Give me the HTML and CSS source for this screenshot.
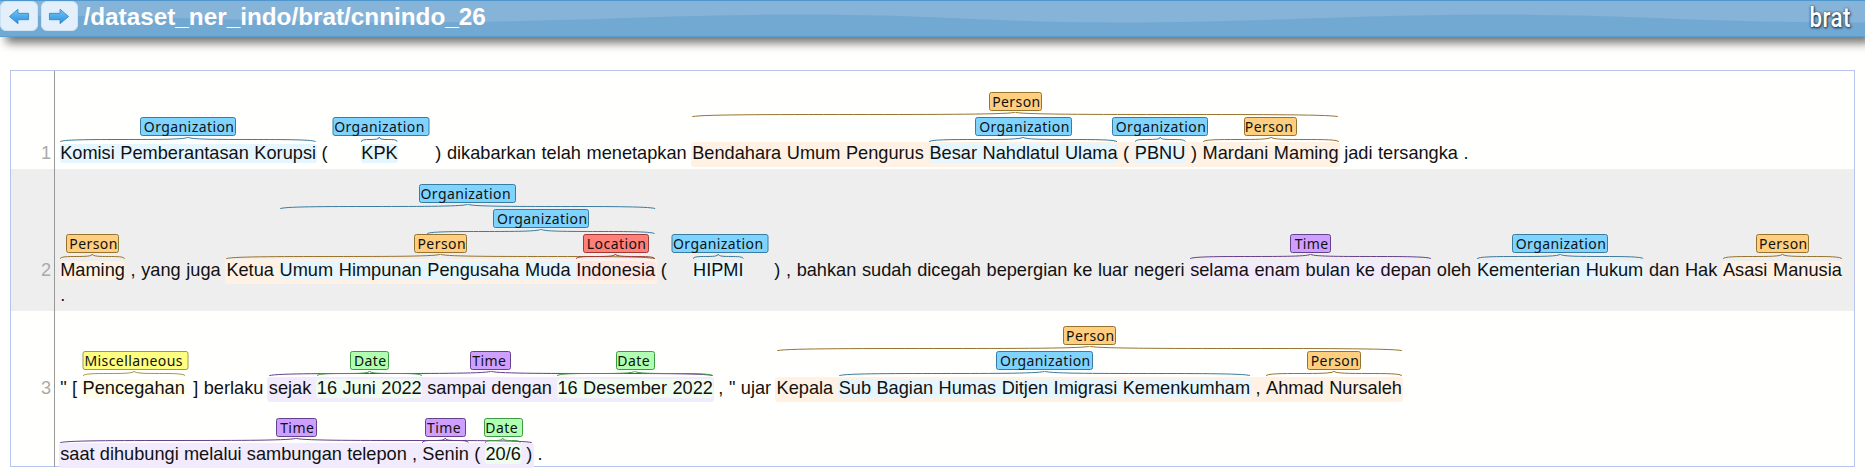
FILE: index.html
```html
<!DOCTYPE html>
<html lang="id">
<head>
<meta charset="utf-8">
<title>/dataset_ner_indo/brat/cnnindo_26</title>
<link rel="stylesheet" href="styles.css">
</head>
<body>
<svg class="defs" aria-hidden="true">
  <defs>
    <linearGradient id="arrowFill" x1="0" y1="0" x2="0" y2="1">
      <stop offset="0" stop-color="#7cc4f2"/><stop offset="1" stop-color="#2390e0"/>
    </linearGradient>
    <symbol id="curly" viewBox="0 0 100 5" preserveAspectRatio="none">
      <path d="M0,5 C0,0 50,5 50,0 C50,5 100,0 100,5" fill="none" stroke="currentColor" vector-effect="non-scaling-stroke"/>
    </symbol>
  </defs>
</svg>
<header class="bar">
  <svg class="wave" viewBox="0 0 1865 36" preserveAspectRatio="none"><path d="M0,15 C150,14 250,22 415,22 C560,22 660,14 802,14 C940,14 980,22 1118,22 C1260,22 1360,14 1505,14 C1640,14 1690,22 1865,22 V36 H0Z"/></svg>
  <nav class="nav">
    <a class="btn"><svg viewBox="0 0 20 16"><path d="M1 8 L9 1.2 V5 H19 V11 H9 V14.8Z"/></svg></a>
    <a class="btn"><svg viewBox="0 0 20 16"><path d="M19 8 L11 1.2 V5 H1 V11 H11 V14.8Z"/></svg></a>
  </nav>
  <h1 class="path">/dataset_ner_indo/brat/cnnindo_26</h1>
  <span class="logo">brat</span>
</header>
<main class="doc">
  <section class="sent s1">
    <div class="num">1</div>
    <div class="lines">
      <p class="line"><span class="ent org"><b class="tag">Organization</b><svg class="curl"><use href="#curly"/></svg>Komisi Pemberantasan Korupsi</span> ( <span class="ent org kpk wide"><b class="tag left">Organization</b><svg class="curl"><use href="#curly"/></svg>KPK</span> ) dikabarkan telah menetapkan <span class="ent per outer l2"><b class="tag">Person</b><svg class="curl"><use href="#curly"/></svg>Bendahara Umum Pengurus <span class="ent org"><b class="tag">Organization</b><svg class="curl"><use href="#curly"/></svg>Besar Nahdlatul Ulama</span> ( <span class="ent org"><b class="tag">Organization</b><svg class="curl"><use href="#curly"/></svg>PBNU</span> ) <span class="ent per"><b class="tag left">Person</b><svg class="curl"><use href="#curly"/></svg>Mardani Maming</span></span> jadi tersangka .</p>
    </div>
  </section>
  <section class="sent s2">
    <div class="num">2</div>
    <div class="lines">
      <p class="line"><span class="ent per"><b class="tag">Person</b><svg class="curl"><use href="#curly"/></svg>Maming</span> , yang juga <span class="ent per outer"><b class="tag">Person</b><svg class="curl"><use href="#curly"/></svg>Ketua <span class="ent org l3"><b class="tag left">Organization</b><svg class="curl"><use href="#curly"/></svg>Umum Himpunan <span class="ent org l2"><b class="tag">Organization</b><svg class="curl"><use href="#curly"/></svg>Pengusaha Muda <span class="ent loc"><b class="tag">Location</b><svg class="curl"><use href="#curly"/></svg>Indonesia</span></span></span></span> ( <span class="ent org hipmi wide"><b class="tag left">Organization</b><svg class="curl"><use href="#curly"/></svg>HIPMI</span> ) , bahkan sudah dicegah bepergian ke luar negeri <span class="ent tim"><b class="tag">Time</b><svg class="curl"><use href="#curly"/></svg>selama enam bulan ke depan</span> oleh <span class="ent org"><b class="tag">Organization</b><svg class="curl"><use href="#curly"/></svg>Kementerian Hukum</span> dan Hak <span class="ent per"><b class="tag">Person</b><svg class="curl"><use href="#curly"/></svg>Asasi Manusia</span></p>
      <p class="line">.</p>
    </div>
  </section>
  <section class="sent s3">
    <div class="num">3</div>
    <div class="lines">
      <p class="line first">" [ <span class="ent mis wide misc"><b class="tag left">Miscellaneous</b><svg class="curl"><use href="#curly"/></svg>Pencegahan</span> ] berlaku <span class="ent tim outer"><b class="tag left">Time</b><svg class="curl"><use href="#curly"/></svg>sejak <span class="ent dat"><b class="tag">Date</b><svg class="curl"><use href="#curly"/></svg>16 Juni 2022</span> sampai dengan <span class="ent dat"><b class="tag left">Date</b><svg class="curl"><use href="#curly"/></svg>16 Desember 2022</span></span> , " ujar <span class="ent per outer l2"><b class="tag">Person</b><svg class="curl"><use href="#curly"/></svg>Kepala <span class="ent org"><b class="tag">Organization</b><svg class="curl"><use href="#curly"/></svg>Sub Bagian Humas Ditjen Imigrasi Kemenkumham</span> , <span class="ent per"><b class="tag">Person</b><svg class="curl"><use href="#curly"/></svg>Ahmad Nursaleh</span></span></p>
      <p class="line last"><span class="ent tim outer"><b class="tag">Time</b><svg class="curl"><use href="#curly"/></svg>saat dihubungi melalui sambungan telepon , <span class="ent tim"><b class="tag left">Time</b><svg class="curl"><use href="#curly"/></svg>Senin</span> ( <span class="ent dat"><b class="tag left">Date</b><svg class="curl"><use href="#curly"/></svg>20/6</span> )</span> .</p>
    </div>
  </section>
</main>
</body>
</html>
```
FILE: styles.css
```css
* { box-sizing: border-box; }
body { margin: 0; background: #fffffd; font-family: "Liberation Sans", Arial, sans-serif; height: 475px; overflow: hidden; }
.defs { position: absolute; width: 0; height: 0; }

.bar { position: relative; display: flex; height: 37px; background: #86b3d8; border-top: 1px solid #4f96cc; border-bottom: 1px solid #5b9fd0; box-shadow: 6px 6px 9px rgba(0, 0, 0, .55); }
.wave { position: absolute; inset: 0; width: 100%; height: 100%; fill: #72a9d3; }
.nav { position: relative; display: flex; gap: 3px; }
.btn { width: 37.5px; height: 30px; border-radius: 6px; background: #e3f0fb; border: 1px solid #cfe3f4; display: flex; align-items: center; justify-content: center; }
.btn svg { width: 22px; height: 17px; fill: url(#arrowFill); stroke: #3c8fce; stroke-width: .9; stroke-linejoin: round; }
.path { position: relative; margin: 0 0 0 5.5px; font-size: 24.3px; line-height: 31px; font-weight: bold; color: #fff; }
.logo { position: relative; margin-left: auto; margin-right: 14px; font: 500 28px/33px Roboto, sans-serif; letter-spacing: .6px; color: #fff; transform: scaleX(.8); transform-origin: right; text-shadow: 1px 1px 3px #123, 0 0 2px #345; }

.doc { margin: 33px 10px 0 10px; height: 397px; border: 1px solid #b9c4ee; }
.sent { display: flex; }
.num { width: 44px; border-right: 1px solid #999; padding-right: 3px; text-align: right; color: #aaa; font-size: 18.2px; line-height: 25px; }
.lines { flex: 1; padding-left: 5.2px; }
.s1 > * { padding-top: 70px; padding-bottom: 3px; }
.s2 > * { padding-top: 89px; padding-bottom: 3px; }
.s3 > * { padding-top: 65px; }
.s2 { background: #eee; }
.line { --base: -23.6px; margin: 0; height: 25px; line-height: 25px; font-size: 18.2px; white-space: nowrap; color: #111; word-spacing: .54px; isolation: isolate; }
.s2 .line { word-spacing: .6px; }
.first { --base: -24.7px; }
.s3 .line { word-spacing: .4px; }
.s3 .last { margin-top: 41px; word-spacing: .2px; }

.ent { --top: var(--base); position: relative; display: inline-block; height: 25px; vertical-align: top; }
.ent::before { content: ""; position: absolute; z-index: -1; inset: 3px -.5px 3px; border-radius: 3px; background: var(--soft); }
.ent.outer::before { inset: 1px -1.5px -1px; }
.tag { position: absolute; left: 50%; top: var(--top); width: var(--w); height: 19px; margin-left: calc(var(--w) / -2); padding-left: 2px; border: 1px solid var(--line); border-radius: 2.5px; background: var(--fill); font: 14px/17px "Noto Sans", sans-serif; letter-spacing: .42px; word-spacing: 0; text-align: center; color: #111; z-index: 1; }
.tag.left { padding: 0 3px 0 0; }
.wide > .tag { transform: translateX(1.5px); }
.curl { position: absolute; left: 0; top: calc(var(--top) + 20px); width: 100%; height: 5px; overflow: visible; color: var(--line); }
.l2 { --top: calc(var(--base) - 25.2px); }
.l3 { --top: calc(var(--base) - 50.3px); }

.org { --fill: #7fd4ff; --line: #3a7ca0; --soft: #e5f6ff; --w: 96.5px; }
.per { --fill: #ffcf7f; --line: #96742f; --soft: #fff1e4; --w: 53.5px; }
.loc { --fill: #ff8078; --line: #a03a35; --soft: #ffe6e5; --w: 66px; }
.tim { --fill: #cf9fff; --line: #65408c; --soft: #f2eafd; --w: 41px; }
.dat { --fill: #b0ffb0; --line: #3f9a45; --soft: #effdef; --w: 39px; }
.mis { --fill: #ffff80; --line: #9b9b48; --soft: #fffde6; --w: 106px; }

.kpk { margin: 0 32px 0 28px; }
.hipmi { margin: 0 25px 0 20.6px; }
.misc { margin: 0 3px 0 0; }
```
